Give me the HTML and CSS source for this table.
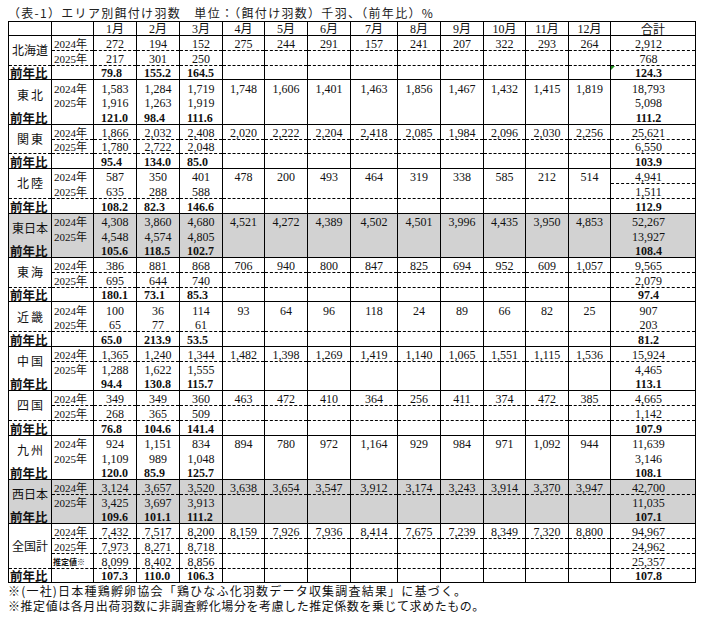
FILE: index.html
```html
<!DOCTYPE html>
<html lang="ja">
<head>
<meta charset="utf-8">
<title>エリア別餌付け羽数</title>
<link rel="stylesheet" href="styles.css">
</head>
<body>
<div class="page">
<div class="title">（表-1）エリア別餌付け羽数　単位：（餌付け羽数）千羽、（前年比）%</div>
<table class="t">
<colgroup>
<col class="w43"><col class="w42"><col class="w43"><col class="w43"><col class="w43"><col class="w42"><col class="w43"><col class="w43"><col class="w47"><col class="w43"><col class="w43"><col class="w42"><col class="w43"><col class="w42"><col class="w85">
</colgroup>
<thead>
<tr class="hd"><td></td><td></td><td>1月</td><td>2月</td><td>3月</td><td>4月</td><td>5月</td><td>6月</td><td>7月</td><td>8月</td><td>9月</td><td>10月</td><td>11月</td><td>12月</td><td class="tot ttl">合計</td></tr>
</thead>

<tbody class="a b">
<tr class="y1"><td class="rg" rowspan="2">北海道</td><td class="yr">2024年</td><td>272</td><td>194</td><td>152</td><td>275</td><td>244</td><td>291</td><td>157</td><td>241</td><td>207</td><td>322</td><td>293</td><td>264</td><td class="tot">2,912</td></tr>
<tr class="y2"><td class="yr">2025年</td><td>217</td><td>301</td><td>250</td><td></td><td></td><td></td><td></td><td></td><td></td><td></td><td></td><td></td><td class="tot">768</td></tr>
<tr class="pr"><td class="pl">前年比</td><td></td><td class="r">79.8</td><td class="r">155.2</td><td class="r">164.5</td><td></td><td></td><td></td><td></td><td></td><td></td><td></td><td></td><td></td><td class="tot r err">124.3</td></tr>
</tbody>

<tbody>
<tr class="y1"><td class="rg sp" rowspan="2">東北</td><td class="yr">2024年</td><td>1,583</td><td>1,284</td><td>1,719</td><td>1,748</td><td>1,606</td><td>1,401</td><td>1,463</td><td>1,856</td><td>1,467</td><td>1,432</td><td>1,415</td><td>1,819</td><td class="tot">18,793</td></tr>
<tr class="y2"><td class="yr">2025年</td><td>1,916</td><td>1,263</td><td>1,919</td><td></td><td></td><td></td><td></td><td></td><td></td><td></td><td></td><td></td><td class="tot">5,098</td></tr>
<tr class="pr"><td class="pl">前年比</td><td></td><td class="r">121.0</td><td class="r">98.4</td><td class="r">111.6</td><td></td><td></td><td></td><td></td><td></td><td></td><td></td><td></td><td></td><td class="tot r">111.2</td></tr>
</tbody>

<tbody class="a b">
<tr class="y1"><td class="rg sp" rowspan="2">関東</td><td class="yr">2024年</td><td>1,866</td><td>2,032</td><td>2,408</td><td>2,020</td><td>2,222</td><td>2,204</td><td>2,418</td><td>2,085</td><td>1,984</td><td>2,096</td><td>2,030</td><td>2,256</td><td class="tot">25,621</td></tr>
<tr class="y2"><td class="yr">2025年</td><td>1,780</td><td>2,722</td><td>2,048</td><td></td><td></td><td></td><td></td><td></td><td></td><td></td><td></td><td></td><td class="tot">6,550</td></tr>
<tr class="pr"><td class="pl">前年比</td><td></td><td class="r">95.4</td><td class="r">134.0</td><td class="r">85.0</td><td></td><td></td><td></td><td></td><td></td><td></td><td></td><td></td><td></td><td class="tot r">103.9</td></tr>
</tbody>

<tbody class="b t1">
<tr class="y1"><td class="rg sp" rowspan="2">北陸</td><td class="yr">2024年</td><td>587</td><td>350</td><td>401</td><td>478</td><td>200</td><td>493</td><td>464</td><td>319</td><td>338</td><td>585</td><td>212</td><td>514</td><td class="tot">4,941</td></tr>
<tr class="y2"><td class="yr">2025年</td><td>635</td><td>288</td><td>588</td><td></td><td></td><td></td><td></td><td></td><td></td><td></td><td></td><td></td><td class="tot">1,511</td></tr>
<tr class="pr"><td class="pl">前年比</td><td></td><td class="r">108.2</td><td class="r">82.3</td><td class="r">146.6</td><td></td><td></td><td></td><td></td><td></td><td></td><td></td><td></td><td></td><td class="tot r">112.9</td></tr>
</tbody>

<tbody class="g">
<tr class="y1"><td class="rg" rowspan="2">東日本</td><td class="yr">2024年</td><td>4,308</td><td>3,860</td><td>4,680</td><td>4,521</td><td>4,272</td><td>4,389</td><td>4,502</td><td>4,501</td><td>3,996</td><td>4,435</td><td>3,950</td><td>4,853</td><td class="tot">52,267</td></tr>
<tr class="y2"><td class="yr">2025年</td><td>4,548</td><td>4,574</td><td>4,805</td><td></td><td></td><td></td><td></td><td></td><td></td><td></td><td></td><td></td><td class="tot">13,927</td></tr>
<tr class="pr"><td class="pl">前年比</td><td></td><td class="r">105.6</td><td class="r">118.5</td><td class="r">102.7</td><td></td><td></td><td></td><td></td><td></td><td></td><td></td><td></td><td></td><td class="tot r">108.4</td></tr>
</tbody>

<tbody class="a b">
<tr class="y1"><td class="rg sp" rowspan="2">東海</td><td class="yr">2024年</td><td>386</td><td>881</td><td>868</td><td>706</td><td>940</td><td>800</td><td>847</td><td>825</td><td>694</td><td>952</td><td>609</td><td>1,057</td><td class="tot">9,565</td></tr>
<tr class="y2"><td class="yr">2025年</td><td>695</td><td>644</td><td>740</td><td></td><td></td><td></td><td></td><td></td><td></td><td></td><td></td><td></td><td class="tot">2,079</td></tr>
<tr class="pr"><td class="pl">前年比</td><td></td><td class="r">180.1</td><td class="r">73.1</td><td class="r">85.3</td><td></td><td></td><td></td><td></td><td></td><td></td><td></td><td></td><td></td><td class="tot r">97.4</td></tr>
</tbody>

<tbody class="b">
<tr class="y1"><td class="rg sp" rowspan="2">近畿</td><td class="yr">2024年</td><td>100</td><td>36</td><td>114</td><td>93</td><td>64</td><td>96</td><td>118</td><td>24</td><td>89</td><td>66</td><td>82</td><td>25</td><td class="tot">907</td></tr>
<tr class="y2"><td class="yr">2025年</td><td>65</td><td>77</td><td>61</td><td></td><td></td><td></td><td></td><td></td><td></td><td></td><td></td><td></td><td class="tot">203</td></tr>
<tr class="pr"><td class="pl">前年比</td><td></td><td class="r">65.0</td><td class="r">213.9</td><td class="r">53.5</td><td></td><td></td><td></td><td></td><td></td><td></td><td></td><td></td><td></td><td class="tot r">81.2</td></tr>
</tbody>

<tbody class="a">
<tr class="y1"><td class="rg sp" rowspan="2">中国</td><td class="yr">2024年</td><td>1,365</td><td>1,240</td><td>1,344</td><td>1,482</td><td>1,398</td><td>1,269</td><td>1,419</td><td>1,140</td><td>1,065</td><td>1,551</td><td>1,115</td><td>1,536</td><td class="tot">15,924</td></tr>
<tr class="y2"><td class="yr">2025年</td><td>1,288</td><td>1,622</td><td>1,555</td><td></td><td></td><td></td><td></td><td></td><td></td><td></td><td></td><td></td><td class="tot">4,465</td></tr>
<tr class="pr"><td class="pl">前年比</td><td></td><td class="r">94.4</td><td class="r">130.8</td><td class="r">115.7</td><td></td><td></td><td></td><td></td><td></td><td></td><td></td><td></td><td></td><td class="tot r">113.1</td></tr>
</tbody>

<tbody class="a b">
<tr class="y1"><td class="rg sp" rowspan="2">四国</td><td class="yr">2024年</td><td>349</td><td>349</td><td>360</td><td>463</td><td>472</td><td>410</td><td>364</td><td>256</td><td>411</td><td>374</td><td>472</td><td>385</td><td class="tot">4,665</td></tr>
<tr class="y2"><td class="yr">2025年</td><td>268</td><td>365</td><td>509</td><td></td><td></td><td></td><td></td><td></td><td></td><td></td><td></td><td></td><td class="tot">1,142</td></tr>
<tr class="pr"><td class="pl">前年比</td><td></td><td class="r">76.8</td><td class="r">104.6</td><td class="r">141.4</td><td></td><td></td><td></td><td></td><td></td><td></td><td></td><td></td><td></td><td class="tot r">107.9</td></tr>
</tbody>

<tbody>
<tr class="y1"><td class="rg sp" rowspan="2">九州</td><td class="yr">2024年</td><td>924</td><td>1,151</td><td>834</td><td>894</td><td>780</td><td>972</td><td>1,164</td><td>929</td><td>984</td><td>971</td><td>1,092</td><td>944</td><td class="tot">11,639</td></tr>
<tr class="y2"><td class="yr">2025年</td><td>1,109</td><td>989</td><td>1,048</td><td></td><td></td><td></td><td></td><td></td><td></td><td></td><td></td><td></td><td class="tot">3,146</td></tr>
<tr class="pr"><td class="pl">前年比</td><td></td><td class="r">120.0</td><td class="r">85.9</td><td class="r">125.7</td><td></td><td></td><td></td><td></td><td></td><td></td><td></td><td></td><td></td><td class="tot r">108.1</td></tr>
</tbody>

<tbody class="g a">
<tr class="y1"><td class="rg" rowspan="2">西日本</td><td class="yr">2024年</td><td>3,124</td><td>3,657</td><td>3,520</td><td>3,638</td><td>3,654</td><td>3,547</td><td>3,912</td><td>3,174</td><td>3,243</td><td>3,914</td><td>3,370</td><td>3,947</td><td class="tot">42,700</td></tr>
<tr class="y2"><td class="yr">2025年</td><td>3,425</td><td>3,697</td><td>3,913</td><td></td><td></td><td></td><td></td><td></td><td></td><td></td><td></td><td></td><td class="tot">11,035</td></tr>
<tr class="pr"><td class="pl">前年比</td><td></td><td class="r">109.6</td><td class="r">101.1</td><td class="r">111.2</td><td></td><td></td><td></td><td></td><td></td><td></td><td></td><td></td><td></td><td class="tot r">107.1</td></tr>
</tbody>

<tbody class="a b c">
<tr class="y1"><td class="rg" rowspan="3">全国計</td><td class="yr">2024年</td><td>7,432</td><td>7,517</td><td>8,200</td><td>8,159</td><td>7,926</td><td>7,936</td><td>8,414</td><td>7,675</td><td>7,239</td><td>8,349</td><td>7,320</td><td>8,800</td><td class="tot">94,967</td></tr>
<tr class="y2"><td class="yr">2025年</td><td>7,973</td><td>8,271</td><td>8,718</td><td></td><td></td><td></td><td></td><td></td><td></td><td></td><td></td><td></td><td class="tot">24,962</td></tr>
<tr class="y3"><td class="yr est">推定値※</td><td>8,099</td><td>8,402</td><td>8,856</td><td></td><td></td><td></td><td></td><td></td><td></td><td></td><td></td><td></td><td class="tot">25,357</td></tr>
<tr class="pr"><td class="pl">前年比</td><td></td><td class="r">107.3</td><td class="r">110.0</td><td class="r">106.3</td><td></td><td></td><td></td><td></td><td></td><td></td><td></td><td></td><td></td><td class="tot r">107.8</td></tr>
</tbody>
</table>
<div class="notes">
<div class="n1">※(一社)日本種鶏孵卵協会「鶏ひなふ化羽数データ収集調査結果」に基づく。</div>
<div class="n2">※推定値は各月出荷羽数に非調査孵化場分を考慮した推定係数を乗じて求めたもの。</div>
</div>
</div>
</body>
</html>
```

FILE: styles.css
```css
* { box-sizing: border-box; }
body {
  margin: 0;
  background: #fff;
  color: #000;
  font-family: "Noto Sans CJK JP", sans-serif;
}
.page { padding: 5px 0 0 8px; }
.title {
  font-size: 12px;
  line-height: 16px;
  height: 16px;
  letter-spacing: 1.3px;
  color: #222;
  white-space: nowrap;
}
.t {
  border-collapse: collapse;
  table-layout: fixed;
  width: 687px;
  border: 1px solid #000;
}
.w42 { width: 42px; }
.w43 { width: 43px; }
.w47 { width: 47px; }
.w85 { width: 85px; }
.t td {
  border-left: 1px solid #000;
  border-right: 1px solid #000;
  padding: 0;
  font-family: "Liberation Serif", "Noto Sans CJK JP", serif;
  font-size: 12px;
  line-height: 12px;
  text-align: center;
  vertical-align: bottom;
  white-space: nowrap;
  color: #111;
}
.t tr { height: 14.8px; }
.t tr.hd { height: 14px; }
.hd td { vertical-align: middle; border-bottom: 1px solid #000; }
.hd td.ttl { font-family: "Noto Sans CJK JP", sans-serif; font-size: 12px; }
.t tbody { border-top: 1px solid #000; }
.t td.rg {
  font-family: "Noto Sans CJK JP", sans-serif;
  font-size: 12px;
  vertical-align: middle;
  line-height: 14px;
}
.t td.rg.sp { letter-spacing: 2px; padding-left: 2px; }
.t td.yr {
  text-align: left;
  padding-left: 2px;
  font-size: 11px;
}
.t td.est {
  font-family: "Noto Sans CJK JP", sans-serif;
  font-size: 8px;
  font-weight: 700;
  padding-left: 1px;
}
.t td.pl {
  font-family: "Noto Sans CJK JP", sans-serif;
  font-weight: 700;
  font-size: 12.5px;
  line-height: 12px;
  text-align: left;
  padding-left: 1px;
}
.t td.r {
  font-weight: 700;
  text-align: left;
  padding-left: 7px;
  font-size: 12px;
}
.t td.tot { text-align: center; padding-right: 9px; }
.t td.tot.r { text-align: center; padding-left: 0; }
.hd td.tot { padding-right: 0; }

/* inner dashed rules */
.a tr.y1 td:not(.rg) { border-bottom: 1px dashed #000; }
.c tr.y2 td:not(.rg) { border-bottom: 1px dashed #000; }
.b tr.pr td { border-top: 1px dashed #000; }
.t1 tr.y1 td.tot { border-bottom: 1px dashed #000; }

.g td { background: #d2d2d2; }

.err { position: relative; }
.err::before {
  content: "";
  position: absolute;
  left: 0;
  top: 0;
  border-top: 4px solid #1f8f1f;
  border-right: 4px solid transparent;
}

.notes {
  font-size: 12px;
  line-height: 15px;
  color: #111;
  white-space: nowrap;
}
.n1 { letter-spacing: 1.2px; }
.n2 { letter-spacing: 0.55px; }
```
